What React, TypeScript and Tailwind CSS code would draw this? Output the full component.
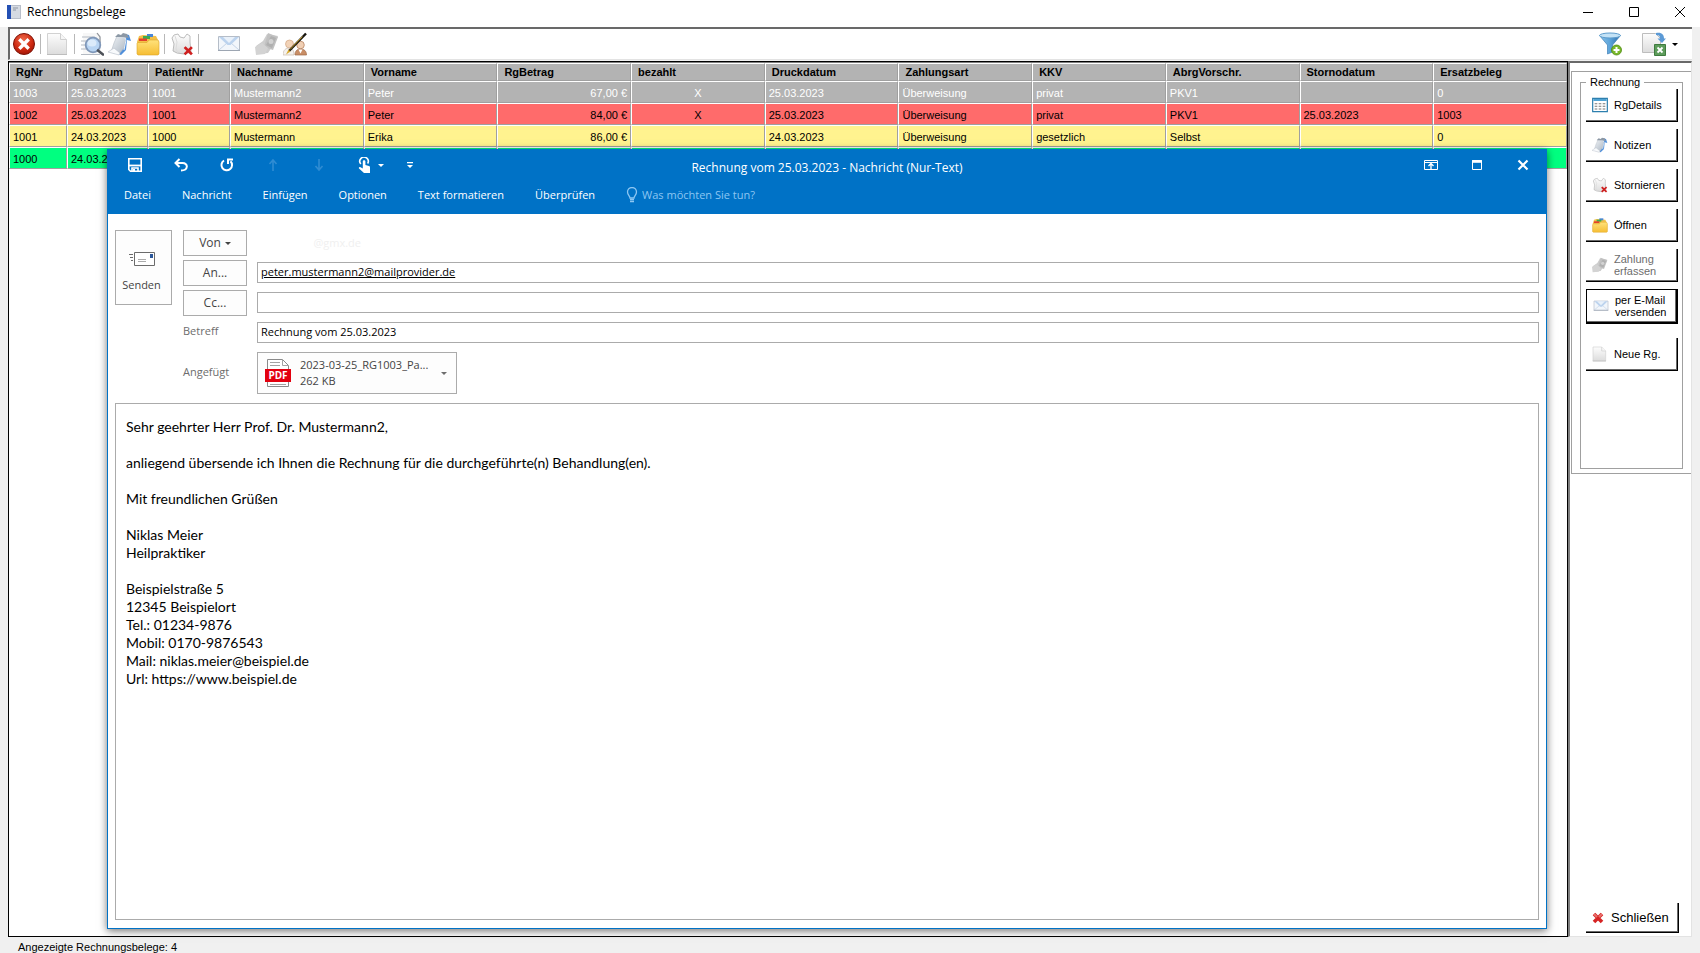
import type { ReactNode } from "react";

const columns = [
  "RgNr",
  "RgDatum",
  "PatientNr",
  "Nachname",
  "Vorname",
  "RgBetrag",
  "bezahlt",
  "Druckdatum",
  "Zahlungsart",
  "KKV",
  "AbrgVorschr.",
  "Stornodatum",
  "Ersatzbeleg",
];

const rows = [
  {
    style: "bg-[#b3b3b3] text-white",
    cells: ["1003", "25.03.2023", "1001", "Mustermann2", "Peter", "67,00 €", "X", "25.03.2023", "Überweisung", "privat", "PKV1", "", "0"],
  },
  {
    style: "bg-[#ff6b6b]",
    cells: ["1002", "25.03.2023", "1001", "Mustermann2", "Peter", "84,00 €", "X", "25.03.2023", "Überweisung", "privat", "PKV1", "25.03.2023", "1003"],
  },
  {
    style: "bg-[#fff38f]",
    cells: ["1001", "24.03.2023", "1000", "Mustermann", "Erika", "86,00 €", "", "24.03.2023", "Überweisung", "gesetzlich", "Selbst", "", "0"],
  },
  {
    style: "bg-[#00ff80]",
    cells: ["1000", "24.03.2023", "", "", "", "", "", "", "", "", "", "", ""],
  },
];

const message = `Sehr geehrter Herr Prof. Dr. Mustermann2,

anliegend übersende ich Ihnen die Rechnung für die durchgeführte(n) Behandlung(en).

Mit freundlichen Grüßen

Niklas Meier
Heilpraktiker

Beispielstraße 5
12345 Beispielort
Tel.: 01234-9876
Mobil: 0170-9876543
Mail: niklas.meier@beispiel.de
Url: https://www.beispiel.de`;

/* Icons */

function Gradients() {
  return (
    <svg className="absolute size-0" aria-hidden="true">
      <defs>
        <linearGradient id="paper" x1="0" y1="0" x2="0" y2="1">
          <stop offset="0" stopColor="#fdfdfd" />
          <stop offset="1" stopColor="#dcdcdc" />
        </linearGradient>
        <linearGradient id="folder" x1="0" y1="0" x2="0" y2="1">
          <stop offset="0" stopColor="#ffe27a" />
          <stop offset="1" stopColor="#f6bd33" />
        </linearGradient>
        <linearGradient id="funnel" x1="0" y1="0" x2="1" y2="0">
          <stop offset="0" stopColor="#8cc4ea" />
          <stop offset="0.5" stopColor="#5ba3d9" />
          <stop offset="1" stopColor="#2f6fae" />
        </linearGradient>
        <linearGradient id="note" x1="0" y1="0" x2="1" y2="1">
          <stop offset="0" stopColor="#f2f5f8" />
          <stop offset="1" stopColor="#a9b4c0" />
        </linearGradient>
        <radialGradient id="stop" cx="0.45" cy="0.3" r="0.75">
          <stop offset="0" stopColor="#ee6a4a" />
          <stop offset="0.6" stopColor="#cf2a12" />
          <stop offset="1" stopColor="#9a1204" />
        </radialGradient>
      </defs>
    </svg>
  );
}

function Icon({ size = "size-6", children }: { size?: string; children: ReactNode }) {
  return (
    <svg viewBox="0 0 24 24" fill="none" className={`${size} shrink-0`} aria-hidden="true">
      {children}
    </svg>
  );
}

function StopIcon() {
  return (
    <Icon>
      <circle cx="12" cy="12" r="10.5" fill="url(#stop)" stroke="#7d1408" />
      <path d="M8.500 8.500l7 7M15.500 8.500l-7 7" stroke="#fff" strokeWidth="3.400" strokeLinecap="square" />
    </Icon>
  );
}

function PageIcon({ size }: { size?: string }) {
  return (
    <Icon size={size}>
      <path d="M1.500 1.500h13l6 6v15h-19z" fill="url(#paper)" stroke="#d2d2d2" />
      <path d="M14.500 1.500v6h6" fill="#f6f6f6" stroke="#cfcfcf" />
      <path d="M1 22.500h20" stroke="#bdbdbd" />
    </Icon>
  );
}

function PreviewIcon() {
  return (
    <Icon>
      <path d="M3 1h15l3 3v19H3z" fill="#f7f7f7" />
      <path d="M2 5h13M1 9h7M1 13h5M1 17h6M1 22.500h19" stroke="#b4bac2" strokeWidth="1.200" />
      <path d="M17 1l3 4v6" stroke="#8d9197" strokeWidth="1.200" />
      <circle cx="13" cy="13" r="7.300" fill="#b9d5f3" stroke="#7f97b8" strokeWidth="1.800" />
      <ellipse cx="12" cy="11" rx="4.500" ry="3.500" fill="#dcebfa" />
      <path d="M18 18.500l5 4" stroke="#4e5259" strokeWidth="2.600" strokeLinecap="round" />
    </Icon>
  );
}

function NoteIcon({ size }: { size?: string }) {
  return (
    <Icon size={size}>
      <path d="M17 2l4 1 2 6-4-1-1 10-5 5-3-1z" fill="#4f8fdb" />
      <path d="M9 4l9 1-2 11-5 6-8-2 3-9z" fill="url(#note)" stroke="#b3bcc6" strokeWidth="0.600" />
      <path d="M7 5l3-3 3 1 2-2 4 1 2 4-5-1z" fill="#8c98a5" />
      <path d="M0 20l6-4 6 5-1 2z" fill="#f8fafc" stroke="#b6bec8" strokeWidth="0.600" />
      <path d="M17 6l1 2-2 10" stroke="#fff" strokeWidth="0.800" />
    </Icon>
  );
}

function FolderIcon({ size }: { size?: string }) {
  return (
    <Icon size={size}>
      <path d="M1 10l2-6 4-1 13 1 3 6v12H1z" fill="#f3c048" />
      <path d="M11 2h6v3h-6z" fill="#4a86d6" />
      <path d="M7 4h7v3H7z" fill="#3cab50" />
      <path d="M3 6.500h8V9H3z" fill="#e2412c" />
      <path d="M1 11.500l1-1h9l2-2.500h9l1 2v12l-1 1H2l-1-1z" fill="url(#folder)" stroke="#dba42a" strokeWidth="0.600" />
    </Icon>
  );
}

function CancelNoteIcon({ size }: { size?: string }) {
  return (
    <Icon size={size}>
      <path
        d="M4 3l4-1 2 3 4 1 3-4 3 2 0 6 1 10-7 2-7-1-4-2 1-7-2-6z"
        fill="url(#paper)"
        stroke="#b4b4b4"
        strokeWidth="0.900"
      />
      <path d="M5 4l2 6-1 7 2 4" stroke="#dcdcdc" />
      <path d="M15.500 16l5.500 5.500M21 16l-5.500 5.500" stroke="#cf1f1f" strokeWidth="2.600" strokeLinecap="square" />
    </Icon>
  );
}

function MailIcon({ size }: { size?: string }) {
  return (
    <Icon size={size}>
      <path d="M1.500 4.500h21v14h-21z" fill="#f2f6fb" stroke="#b5bdc8" />
      <path d="M2 18l8-7M22 18l-8-7" stroke="#c4d3e6" />
      <path d="M2 5h20l-8.500 8h-3z" fill="#bcd3ee" />
      <path d="M6 5h12l-6 6z" fill="#e9f1fa" />
      <path d="M1 18.500h22" stroke="#9da6b2" />
    </Icon>
  );
}

function MoneyIcon({ size }: { size?: string }) {
  return (
    <Icon size={size}>
      <path d="M1 14l7-5 4-7 11 2-4 8-6 9-11 1z" fill="#cdcdcd" />
      <path d="M13 1l10 4-5 13-9-3z" fill="#c1c1c1" />
      <path d="M11 13l5-9 5 2-4 10z" fill="#b0b0b0" />
      <circle cx="16" cy="9.500" r="2.500" fill="#d2d2d2" />
      <path d="M0 15l7-4 6 5-3 6-9 1z" fill="#d3d3d3" />
    </Icon>
  );
}

function SignIcon() {
  return (
    <Icon>
      <circle cx="6.500" cy="12" r="4" fill="#f2d3b8" stroke="#d2a684" strokeWidth="0.700" />
      <circle cx="17.500" cy="13" r="3.800" fill="#f0cfb4" stroke="#b27a55" strokeWidth="0.700" />
      <path d="M0 23c0-5 3-7 6-7s5 2 5 7z" fill="#f4f1ee" stroke="#c9b9ab" strokeWidth="0.700" />
      <path d="M12 23c0-4 2-6 5.500-6s6 2 6 6z" fill="#c98e66" stroke="#9f6a47" strokeWidth="0.700" />
      <path d="M15.500 17.500l2 4 2-4z" fill="#fff" />
      <path d="M23 1.500L6 19" stroke="#17150f" strokeWidth="2.400" />
      <path d="M19.500 4.500L7 17.500" stroke="#d8a92d" strokeWidth="0.900" />
      <path d="M5.500 17.500l2 2-4.500 3z" fill="#d8a92d" />
    </Icon>
  );
}

function FilterIcon() {
  return (
    <Icon>
      <path d="M1.500 3.500l8 9.500v9l5-2v-7l8-9.500z" fill="url(#funnel)" stroke="#3e7fb8" strokeWidth="0.700" />
      <ellipse cx="12" cy="3.500" rx="10.500" ry="2.500" fill="#c3e2f6" stroke="#5d9ccd" />
      <circle cx="18.500" cy="18" r="5" fill="#78b72a" stroke="#4e8a12" strokeWidth="0.800" />
      <path d="M18.500 15v6M15.500 18h6" stroke="#fff" strokeWidth="2" />
    </Icon>
  );
}

function ExportIcon() {
  return (
    <Icon>
      <path d="M.5 1.500h13l5 5v14H.5z" fill="url(#paper)" stroke="#bdbdbd" />
      <path d="M14 1c6-1 8 2 8 5.500h2L20 11l-4.500-4.500H18C18 4 17 3 14 3z" fill="#5b9ad6" />
      <path d="M12.500 12.500h11v11h-11z" fill="#5d9c5b" stroke="#3f7b3e" />
      <path d="M15.500 15.500l5 5M20.500 15.500l-5 5" stroke="#fff" strokeWidth="1.800" />
    </Icon>
  );
}

function ListIcon() {
  return (
    <Icon size="size-4">
      <path d="M1 2h22v20H1z" fill="#fff" stroke="#2d7fae" strokeWidth="1.800" />
      <path d="M2 3h20v3H2z" fill="#4fa3d4" />
      <path d="M4 10h4M10 10h4M16 10h4M4 14h4M10 14h4M16 14h4M4 18h4M10 18h4M16 18h4" stroke="#777" strokeWidth="1.600" />
    </Icon>
  );
}

function Caret({ className }: { className: string }) {
  return (
    <svg viewBox="0 0 6 3" className={`h-[3px] w-[6px] shrink-0 ${className}`} aria-hidden="true">
      <path d="M0 0h6L3 3z" fill="currentColor" />
    </svg>
  );
}

function ToolButton({ label, children }: { label: string; children: ReactNode }) {
  return (
    <button type="button" aria-label={label} className="shrink-0">
      {children}
    </button>
  );
}

function Separator() {
  return <span className="w-[2px] h-5 border-l border-[#b8b8b8] shrink-0" />;
}

/* Main window */

function TitleBar() {
  return (
    <header className="flex items-center h-[27px] pb-1 pl-[7px] pr-[11px] bg-white shrink-0">
      <svg viewBox="0 0 14 14" className="size-[14px]" aria-hidden="true">
        <path d="M0 0h14v14H0z" fill="#b9bfca" />
        <path d="M0 0h4v14H0z" fill="#2450b4" />
        <path d="M4 1h9v12H4z" fill="#d5dae2" />
        <path d="M6 3h5M6 5h3" stroke="#8d95a3" />
      </svg>
      <h1 className="ml-1.5 font-[Open_Sans,sans-serif] text-xs leading-4">Rechnungsbelege</h1>
      <div className="flex ml-auto gap-[30px] pr-px">
        <button type="button" aria-label="Minimieren">
          <svg viewBox="0 0 16 12" className="w-4 h-3" stroke="#000">
            <path d="M3 6.500h10" />
          </svg>
        </button>
        <button type="button" aria-label="Maximieren">
          <svg viewBox="0 0 16 12" className="w-4 h-3" fill="none" stroke="#000">
            <path d="M3.500 1.500h9v9h-9z" />
          </svg>
        </button>
        <button type="button" aria-label="Fenster schließen">
          <svg viewBox="0 0 16 12" className="w-4 h-3" stroke="#000">
            <path d="M3 1l10 10M13 1L3 11" />
          </svg>
        </button>
      </div>
    </header>
  );
}

function Toolbar() {
  return (
    <div className="flex items-center gap-1 h-[33px] pl-[2px] pr-3 bg-white border-t-2 border-l-2 border-b border-t-[#696969] border-l-[#696969] border-b-[#e3e3e3] shrink-0">
      <ToolButton label="Beenden">
        <StopIcon />
      </ToolButton>
      <Separator />
      <ToolButton label="Neue Rechnung">
        <PageIcon />
      </ToolButton>
      <Separator />
      <ToolButton label="Vorschau">
        <PreviewIcon />
      </ToolButton>
      <ToolButton label="Notizen">
        <NoteIcon />
      </ToolButton>
      <ToolButton label="Öffnen">
        <FolderIcon />
      </ToolButton>
      <Separator />
      <ToolButton label="Stornieren">
        <CancelNoteIcon />
      </ToolButton>
      <Separator />
      <div className="flex gap-3.5 ml-[13px]">
        <ToolButton label="per E-Mail versenden">
          <MailIcon />
        </ToolButton>
        <div className="flex gap-1">
          <ToolButton label="Zahlung erfassen">
            <MoneyIcon />
          </ToolButton>
          <ToolButton label="Unterschrift">
            <SignIcon />
          </ToolButton>
        </div>
      </div>
      <div className="flex items-center gap-5 ml-auto pr-0.5">
        <ToolButton label="Filter">
          <FilterIcon />
        </ToolButton>
        <button type="button" aria-label="Exportieren" className="flex items-center gap-1.5">
          <ExportIcon />
          <Caret className="text-black" />
        </button>
      </div>
    </div>
  );
}

function InvoiceTable() {
  return (
    <table className="w-full border-t border-separate table-fixed border-[#808080] border-spacing-0">
      <colgroup>
        <col className="w-[58px]" />
        <col className="w-[81px]" />
        <col className="w-[82px]" />
      </colgroup>
      <thead>
        <tr className="h-[18px] bg-[#b3b3b3]">
          {columns.map((column) => (
            <th
              key={column}
              className="py-0 pl-[6px] text-left font-bold leading-4 border-t border-l border-r border-b border-t-white border-l-white border-r-[#a0a0a0] border-b-[#a0a0a0]"
            >
              {column}
            </th>
          ))}
        </tr>
      </thead>
      <tbody>
        {rows.map((row) => (
          <tr key={row.cells[0]} className={`h-[22px] ${row.style}`}>
            {row.cells.map((cell, i) => (
              <td
                key={columns[i]}
                className={`pt-0.5 pb-0 pl-[3px] pr-[3px] leading-[18px] border-t border-l border-r border-b border-t-white border-l-white border-r-[#a0a0a0] border-b-[#a0a0a0] ${
                  i === 5 ? "text-right" : i === 6 ? "text-center" : "text-left"
                }`}
              >
                {cell}
              </td>
            ))}
          </tr>
        ))}
      </tbody>
    </table>
  );
}

function SideButton({
  icon,
  disabled,
  focused,
  children,
}: {
  icon: ReactNode;
  disabled?: boolean;
  focused?: boolean;
  children: ReactNode;
}) {
  return (
    <button
      type="button"
      disabled={disabled}
      className={`flex items-center w-full gap-1.5 pl-1.5 min-h-[33px] text-left leading-3 border-black shadow-[inset_-1px_-1px_0_#696969] disabled:text-[#6d6d6d] ${
        focused ? "border-t border-l border-b-2 border-r-2" : "border-b border-r"
      }`}
    >
      {icon}
      <span className="py-1">{children}</span>
    </button>
  );
}

function SidePanel() {
  return (
    <aside className="flex flex-col w-[124px] bg-white border-t-2 border-l-2 border-r border-b border-t-[#696969] border-l-[#808080] border-r-[#e3e3e3] border-b-[#e3e3e3] shrink-0">
      <div className="pt-1 pb-1 pl-2 pr-2 mt-2 ml-px h-[403px] border-t border-b border-l border-[#a0a0a0]">
        <fieldset className="flex flex-col h-full pl-[5px] pr-1 border border-[#a0a0a0]">
          <legend className="px-1 leading-3">Rechnung</legend>
          <div className="flex flex-col gap-[7px] pt-px">
            <SideButton icon={<ListIcon />}>RgDetails</SideButton>
            <SideButton icon={<NoteIcon size="size-4" />}>Notizen</SideButton>
            <SideButton icon={<CancelNoteIcon size="size-4" />}>Stornieren</SideButton>
            <SideButton icon={<FolderIcon size="size-4" />}>Öffnen</SideButton>
            <SideButton icon={<MoneyIcon size="size-4" />} disabled>
              Zahlung
              <br />
              erfassen
            </SideButton>
            <SideButton icon={<MailIcon size="size-4" />} focused>
              per E-Mail
              <br />
              versenden
            </SideButton>
            <div className="mt-[7px]">
              <SideButton icon={<PageIcon size="size-4" />}>Neue Rg.</SideButton>
            </div>
          </div>
        </fieldset>
      </div>
      <button
        type="button"
        className="flex items-center h-[30px] gap-[7px] mt-auto mb-[3px] ml-4 mr-3 pl-1.5 text-[13px] border-black border-b border-r shadow-[inset_-1px_-1px_0_#696969]"
      >
        <svg viewBox="0 0 12 12" className="size-3" aria-hidden="true">
          <path d="M2 2l8 8M10 2l-8 8" stroke="#d62424" strokeWidth="3.600" />
          <path d="M2 2l3 3M10 2L7 5" stroke="#e8706c" strokeWidth="2" />
        </svg>
        Schließen
      </button>
    </aside>
  );
}

/* Mail window */

const tabs = ["Datei", "Nachricht", "Einfügen", "Optionen", "Text formatieren", "Überprüfen"];

function QuickAccess() {
  return (
    <div className="flex items-center pl-5 text-white">
      <button type="button" aria-label="Speichern">
        <svg viewBox="0 0 14 14" className="size-[14px]" fill="none" stroke="currentColor" strokeWidth="1.600">
          <path d="M.8.8h12.400v12.400H2.500L.8 11.500z" />
          <path d="M.8 7.500h12.400" strokeWidth="1.800" />
          <path d="M4 13v-3h6v3" />
          <path d="M5 11h2v2H5z" fill="currentColor" stroke="none" />
        </svg>
      </button>
      <button type="button" aria-label="Rückgängig" className="ml-8">
        <svg viewBox="0 0 14 14" className="size-[14px]" fill="none" stroke="currentColor" strokeWidth="2">
          <path d="M5.500 1L1.500 5l4 4M2 5h6.500c6 0 6 7.500-1.500 7.500" />
        </svg>
      </button>
      <button type="button" aria-label="Wiederholen" className="ml-8">
        <svg viewBox="0 0 14 14" className="size-[14px]" fill="none" stroke="currentColor" strokeWidth="2">
          <path d="M4 2.500A5.300 5.300 0 1 0 10.500 3.300" />
          <path d="M8 6V1.500h5" />
        </svg>
      </button>
      <button type="button" aria-label="Vorheriges Element" disabled className="ml-8 text-[#2f8cd3]">
        <svg viewBox="0 0 14 14" className="size-[14px]" fill="none" stroke="currentColor" strokeWidth="1.600">
          <path d="M7 13V2M3.500 6L7 2l3.500 4" />
        </svg>
      </button>
      <button type="button" aria-label="Nächstes Element" disabled className="ml-8 text-[#2f8cd3]">
        <svg viewBox="0 0 14 14" className="size-[14px]" fill="none" stroke="currentColor" strokeWidth="1.600">
          <path d="M7 1v11M3.500 8L7 12l3.500-4" />
        </svg>
      </button>
      <button type="button" aria-label="Touch-/Mausmodus" className="flex items-center ml-8 gap-[6px]">
        <svg viewBox="0 0 14 16" className="w-[14px] h-4" fill="none">
          <path d="M2.800 7A4.200 4.200 0 1 1 9.600 6.500" stroke="currentColor" strokeWidth="1.600" />
          <path
            d="M4.800 4.500c0-1.700 2.600-1.700 2.600 0V8l3.600 1c1 .3 1 1 1 2v5H6L1 11.500c-.6-1 .6-2 1.500-1.200L4.800 11.500z"
            fill="currentColor"
          />
        </svg>
        <Caret className="" />
      </button>
      <button type="button" aria-label="Symbolleiste anpassen" className="ml-[22px]">
        <svg viewBox="0 0 8 8" className="size-2" fill="currentColor">
          <path d="M1 1h6v1.200H1zM1 4h6L4 7z" />
        </svg>
      </button>
    </div>
  );
}

function MailHeader() {
  return (
    <div className="bg-[#0072c6] text-white h-16">
      <div className="grid items-center h-[30px] grid-cols-[1fr_auto_1fr]">
        <QuickAccess />
        <h2 className="pt-1.5 leading-4">Rechnung vom 25.03.2023 - Nachricht (Nur-Text)</h2>
        <div className="flex items-center justify-end gap-8 pr-4">
          <button type="button" aria-label="Menüband-Anzeigeoptionen">
            <svg viewBox="0 0 14 14" className="size-[14px]" fill="none" stroke="currentColor">
              <path d="M.5 2.500h13v9H.5zM.5 4.500h13" />
              <path d="M7 11V6M4.500 8L7 5.500 9.500 8" strokeWidth="1.400" />
            </svg>
          </button>
          <button type="button" aria-label="Maximieren">
            <svg viewBox="0 0 14 14" className="size-[14px]" fill="none" stroke="currentColor">
              <path d="M2.500 2.500h9v9h-9z" />
              <path d="M2 3.500h10" strokeWidth="2.600" />
            </svg>
          </button>
          <button type="button" aria-label="Nachricht schließen">
            <svg viewBox="0 0 14 14" className="size-[14px]" fill="none" stroke="currentColor" strokeWidth="2.200">
              <path d="M2.500 2.500l9 9M11.500 2.500l-9 9" />
            </svg>
          </button>
        </div>
      </div>
      <nav className="flex items-center pl-4 h-[30px] gap-[31px] text-[11px]">
        {tabs.map((tab) => (
          <button key={tab} type="button" className="leading-4 whitespace-nowrap">
            {tab}
          </button>
        ))}
        <label className="flex items-center gap-1 text-[#8cc6f2]">
          <svg viewBox="0 0 12 16" className="w-3 h-4" fill="none" stroke="currentColor" strokeWidth="1.300" aria-hidden="true">
            <path d="M4 11c0-2-2.500-3-2.500-6a4.500 4.500 0 0 1 9 0c0 3-2.500 4-2.500 6z" />
            <path d="M4 12.500h4M4 14.500h4" />
          </svg>
          <input
            type="text"
            aria-label="Was möchten Sie tun?"
            placeholder="Was möchten Sie tun?"
            className="w-40 leading-4 placeholder:text-[#8cc6f2]"
          />
        </label>
      </nav>
    </div>
  );
}

function PdfIcon() {
  return (
    <svg viewBox="0 0 26 30" className="w-[26px] h-[30px] shrink-0" aria-hidden="true">
      <path d="M2.500 1.500h15l6 6v21h-21z" fill="#fff" stroke="#8a8a8a" />
      <path d="M17.500 1.500v6h6M5 4.500h10M5 7.500h10M5 26.500h16" fill="none" stroke="#a3a3a3" />
      <path d="M0 11h26v13H0z" fill="#e3000f" />
      <text x="13" y="21" textAnchor="middle" fill="#fff" fontSize="10" fontWeight="700">
        PDF
      </text>
    </svg>
  );
}

const boxButton = "border border-[#ababab] bg-[#fdfdfd] text-[#444]";
const field = "self-start w-full h-[21px] mt-0.5 px-[3px] pb-0.5 border border-[#ababab] bg-white text-black text-[11px]";

function MailWindow() {
  return (
    <section className="absolute top-[87px] bottom-[7px] left-[98px] right-5 flex flex-col bg-white border border-[#0072c6] shadow-[0_2px_8px_rgba(0,0,0,0.55)] font-[Open_Sans,sans-serif] text-xs">
      <MailHeader />
      <div className="flex flex-col px-[7px] pt-4 pb-2 grow">
        <div className="flex gap-[11px]">
          <button
            type="button"
            className={`flex flex-col items-center justify-center w-[57px] h-[75px] gap-2.5 pt-2 pr-1 shrink-0 ${boxButton}`}
          >
            <svg viewBox="0 0 28 16" className="h-4 w-7" fill="none" aria-hidden="true">
              <path d="M6.500 1.500h20v13h-20z" fill="#fff" stroke="#6b6b6b" />
              <path d="M1 3.500h4M2 6.500h3M3 9.500h2" stroke="#6b6b6b" />
              <path d="M10 8.500h8M10 10.500h8" stroke="#ababab" />
              <path d="M22 3h3v4h-3z" fill="#2b579a" />
            </svg>
            <span className="leading-4 text-[11px]">Senden</span>
          </button>
          <div className="grid items-center grow grid-cols-[64px_1fr] gap-x-[10px] gap-y-1">
            <button type="button" className={`flex items-center justify-center h-[26px] gap-1 ${boxButton}`}>
              Von <Caret className="text-[#444]" />
            </button>
            <span className="w-[104px] text-right text-[11px] text-[#f0f0f0]">@gmx.de</span>
            <button type="button" className={`h-[26px] ${boxButton}`}>
              An...
            </button>
            <input
              aria-label="An"
              type="text"
              defaultValue="peter.mustermann2@mailprovider.de"
              className={`underline ${field}`}
            />
            <button type="button" className={`h-[26px] ${boxButton}`}>
              Cc...
            </button>
            <input aria-label="Cc" type="text" className={field} />
            <label htmlFor="subject" className="h-[26px] pt-[3px] leading-4 text-[11px] text-[#6d6d6d]">
              Betreff
            </label>
            <input id="subject" type="text" defaultValue="Rechnung vom 25.03.2023" className={field} />
            <span className="text-[11px] text-[#6d6d6d]">Angefügt</span>
            <button
              type="button"
              className={`flex items-center w-[200px] h-[42px] mt-0.5 gap-[9px] pl-[7px] pr-[9px] text-left ${boxButton}`}
            >
              <PdfIcon />
              <span className="leading-4 text-[11px] whitespace-nowrap">
                2023-03-25_RG1003_Pa...
                <br />
                262 KB
              </span>
              <Caret className="ml-auto text-[#6d6d6d]" />
            </button>
          </div>
        </div>
        <textarea
          aria-label="Nachrichtentext"
          defaultValue={message}
          className="block grow mt-[9px] px-[10px] pt-3.5 border border-[#ababab] resize-none font-[Lato,sans-serif] text-sm leading-[18px] text-black"
        />
      </div>
    </section>
  );
}

export default function App() {
  return (
    <div className="flex flex-col h-screen overflow-hidden bg-[#f0f0f0] font-[Liberation_Sans,Arial,sans-serif] text-[11px] text-black">
      <Gradients />
      <TitleBar />
      <div className="flex flex-col min-h-0 pl-2 pr-2 grow">
        <Toolbar />
        <div className="flex min-h-0 mt-px grow">
          <main className="relative bg-white border border-black grow">
            <InvoiceTable />
            <MailWindow />
          </main>
          <SidePanel />
        </div>
      </div>
      <footer className="h-4 pl-[18px] leading-5 shrink-0">Angezeigte Rechnungsbelege: 4</footer>
    </div>
  );
}
